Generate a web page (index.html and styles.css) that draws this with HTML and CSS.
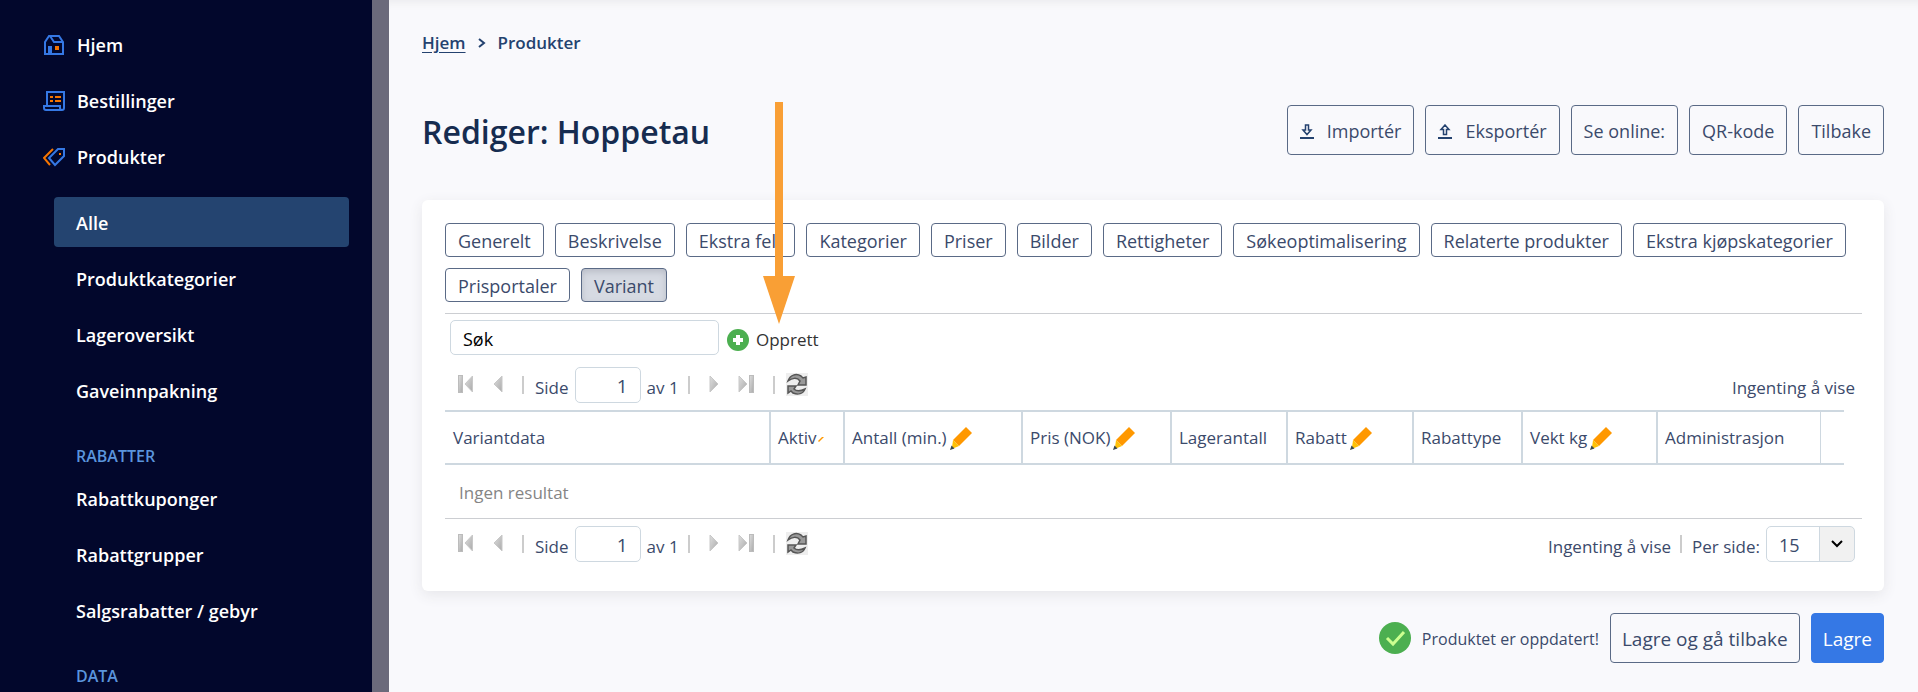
FILE: index.html
```html
<!DOCTYPE html>
<html lang="no">
<head>
<meta charset="utf-8">
<title>Rediger: Hoppetau</title>
<link rel="stylesheet" href="styles.css">
</head>
<body>
<svg class="defs" aria-hidden="true">
  <defs>
    <linearGradient id="silver" x1="0" y1="0" x2="1" y2="1"><stop offset="0" stop-color="#dedede"/><stop offset="1" stop-color="#aaa"/></linearGradient>
    <symbol id="first" viewBox="0 0 16 18"><rect x=".5" y=".5" width="4" height="17" fill="url(#silver)" stroke="#bcbcbc"/><path d="M14.5 1v16L7 9z" fill="url(#silver)" stroke="#c8c8c8"/></symbol>
    <symbol id="prev" viewBox="0 0 10 18"><path d="M9 1v16L1 9z" fill="url(#silver)" stroke="#c8c8c8"/></symbol>
    <symbol id="next" viewBox="0 0 10 18"><path d="M1 1v16l8-8z" fill="url(#silver)" stroke="#c8c8c8"/></symbol>
    <symbol id="last" viewBox="0 0 16 18"><path d="M1 1v16l8-8z" fill="url(#silver)" stroke="#c8c8c8"/><rect x="11.500" y=".5" width="4" height="17" fill="url(#silver)" stroke="#bcbcbc"/></symbol>
    <symbol id="refresh" viewBox="0 0 22 23"><rect width="22" height="23" fill="#eee"/><path d="M2 8C4 2 10 0 15 3l2 2 3-1v8h-8l2-4C11 4 6 5 2 8z" fill="#999" stroke="#555" stroke-width="1.500"/><path d="M19 16c-2 5-7 6-12 4l-2-2-3 2v-7h8l-2 3c3 3 7 2 11 0z" fill="#999" stroke="#555" stroke-width="1.500"/></symbol>
    <symbol id="pen" viewBox="0 0 22 23"><path d="M16 0l6 6L9 19l-6-6z" fill="#ff9800"/><path d="M3 13l6 6-6 2.500-1-1z" fill="#ffc107"/><path d="M1.500 18.500L0 23l4.500-1.500z" fill="#37474f"/></symbol>
  </defs>
</svg>
<div class="app">
  <nav class="sidebar" aria-label="Hovedmeny">
    <ul class="menu">
      <li><a class="menu-link" href="#"><svg class="menu-icon" viewBox="0 0 22 22" fill="none" stroke="#3578e5" stroke-width="2"><path d="M2 20V8l4-6h10l4 6v12zM7 2l4 6h9"/><path d="M5 12h4v8H5z" fill="#3578e5" stroke="none"/><path d="M12 12h4v4h-4z" fill="#f57400" stroke="none"/></svg>Hjem</a></li>
      <li><a class="menu-link" href="#"><svg class="menu-icon" viewBox="0 0 22 22" fill="none" stroke="#3578e5" stroke-width="2"><path d="M4 15V2h17v16q0 2-2 2H3q-2 0-2-2v-2h16v2q0 2 2 2"/><path d="M7 7h3M12 7h6M7 11h3M12 11h6" stroke="#f57400"/></svg>Bestillinger</a></li>
      <li><a class="menu-link" href="#"><svg class="menu-icon" viewBox="0 0 22 22" fill="none" stroke="#3578e5" stroke-width="2"><path d="M15 3h6v7l-9 9-6-7z"/><path d="M10 3l-9 9 6 7" stroke="#f57400"/><path d="M16 7h2v2h-2z" fill="#f57400" stroke="none"/></svg>Produkter</a></li>
    </ul>
    <ul class="menu submenu">
      <li><a class="menu-link active" href="#">Alle</a></li>
      <li><a class="menu-link" href="#">Produktkategorier</a></li>
      <li><a class="menu-link" href="#">Lageroversikt</a></li>
      <li><a class="menu-link" href="#">Gaveinnpakning</a></li>
    </ul>
    <h2 class="menu-title">RABATTER</h2>
    <ul class="menu submenu-group">
      <li><a class="menu-link" href="#">Rabattkuponger</a></li>
      <li><a class="menu-link" href="#">Rabattgrupper</a></li>
      <li><a class="menu-link" href="#">Salgsrabatter / gebyr</a></li>
    </ul>
    <h2 class="menu-title">DATA</h2>
  </nav>
  <main class="main">
    <nav class="crumbs" aria-label="Brødsmulesti">
      <a class="crumb-link" href="#">Hjem</a>
      <svg class="crumb-sep" viewBox="0 0 8 12" fill="none" stroke="#24426f" stroke-width="2"><path d="M1 2l5 4-5 4"/></svg>
      <span>Produkter</span>
    </nav>
    <header class="page-head">
      <h1 class="page-title">Rediger: Hoppetau</h1>
      <div class="actions">
        <button class="btn" type="button"><svg class="btn-icon" viewBox="0 0 14 15" fill="none" stroke="#24426f" stroke-width="2"><path d="M5.500 1h3v5h2.500L7 10.500 3 6h2.500z" stroke-width="1.500"/><path d="M0 14h14"/></svg>Importér</button>
        <button class="btn" type="button"><svg class="btn-icon" viewBox="0 0 14 15" fill="none" stroke="#24426f" stroke-width="2"><path d="M5.500 10.500h3V5.500h2.500L7 1 3 5.500h2.500z" stroke-width="1.500"/><path d="M0 14h14"/></svg>Eksportér</button>
        <button class="btn" type="button">Se online:</button>
        <button class="btn" type="button">QR-kode</button>
        <button class="btn" type="button">Tilbake</button>
      </div>
    </header>
    <section class="card">
      <div class="tabs">
        <button class="tab" type="button">Generelt</button>
        <button class="tab" type="button">Beskrivelse</button>
        <button class="tab" type="button">Ekstra felt</button>
        <button class="tab" type="button">Kategorier</button>
        <button class="tab" type="button">Priser</button>
        <button class="tab" type="button">Bilder</button>
        <button class="tab" type="button">Rettigheter</button>
        <button class="tab" type="button">Søkeoptimalisering</button>
        <button class="tab" type="button">Relaterte produkter</button>
        <button class="tab" type="button">Ekstra kjøpskategorier</button>
        <button class="tab" type="button">Prisportaler</button>
        <button class="tab selected" type="button">Variant</button>
      </div>
      <div class="toolbar">
        <input class="field search" type="text" value="Søk" aria-label="Søk">
        <button class="create" type="button"><svg class="create-icon" viewBox="0 0 22 22"><circle cx="11" cy="11" r="11" fill="#4caf50"/><path d="M11 6v10M6 11h10" stroke="#fff" stroke-width="4"/></svg>Opprett</button>
      </div>
      <div class="pager">
        <button class="icon-btn" type="button" aria-label="Første side"><svg width="16" height="18"><use href="#first"/></svg></button>
        <button class="icon-btn" type="button" aria-label="Forrige side"><svg width="10" height="18"><use href="#prev"/></svg></button>
        <span class="bar"></span>
        <label class="page-label"><span class="text">Side</span><input class="field page" type="text" value="1"><span class="text">av 1</span></label>
        <span class="bar"></span>
        <button class="icon-btn step" type="button" aria-label="Neste side"><svg width="10" height="18"><use href="#next"/></svg></button>
        <button class="icon-btn" type="button" aria-label="Siste side"><svg width="16" height="18"><use href="#last"/></svg></button>
        <span class="bar"></span>
        <button class="icon-btn" type="button" aria-label="Oppdater"><svg width="22" height="23"><use href="#refresh"/></svg></button>
        <span class="text status">Ingenting å vise</span>
      </div>
      <div class="results">
        <table class="grid">
          <colgroup><col><col class="w-active"><col class="w-amount"><col class="w-price"><col class="w-stock"><col class="w-discount"><col class="w-type"><col class="w-weight"><col class="w-admin"><col class="w-end"></colgroup>
          <thead>
            <tr>
              <th>Variantdata</th>
              <th>Aktiv<svg class="pen-small" viewBox="0 0 6 6"><path d="M0 5l4-4h2L1 6z" fill="#ff9800"/></svg></th>
              <th>Antall (min.)<svg class="pen"><use href="#pen"/></svg></th>
              <th>Pris (NOK)<svg class="pen"><use href="#pen"/></svg></th>
              <th>Lagerantall</th>
              <th>Rabatt<svg class="pen"><use href="#pen"/></svg></th>
              <th>Rabattype</th>
              <th>Vekt kg<svg class="pen"><use href="#pen"/></svg></th>
              <th>Administrasjon</th>
              <th class="end"></th>
            </tr>
          </thead>
          <tbody><tr><td colspan="10">Ingen resultat</td></tr></tbody>
        </table>
      </div>
      <div class="pager pager-bottom">
        <button class="icon-btn" type="button" aria-label="Første side"><svg width="16" height="18"><use href="#first"/></svg></button>
        <button class="icon-btn" type="button" aria-label="Forrige side"><svg width="10" height="18"><use href="#prev"/></svg></button>
        <span class="bar"></span>
        <label class="page-label"><span class="text">Side</span><input class="field page" type="text" value="1"><span class="text">av 1</span></label>
        <span class="bar"></span>
        <button class="icon-btn step" type="button" aria-label="Neste side"><svg width="10" height="18"><use href="#next"/></svg></button>
        <button class="icon-btn" type="button" aria-label="Siste side"><svg width="16" height="18"><use href="#last"/></svg></button>
        <span class="bar"></span>
        <button class="icon-btn" type="button" aria-label="Oppdater"><svg width="22" height="23"><use href="#refresh"/></svg></button>
        <span class="text status">Ingenting å vise</span>
        <span class="bar"></span>
        <label class="page-label per-page"><span class="text">Per side:</span>
          <span class="select-wrap"><select class="select"><option>15</option><option>30</option><option>50</option></select><svg class="chevron" viewBox="0 0 12 8" fill="none" stroke="#000" stroke-width="2"><path d="M1 1l5 5 5-5"/></svg></span>
        </label>
      </div>
    </section>
    <footer class="foot">
      <svg class="ok" viewBox="0 0 32 32"><circle cx="16" cy="16" r="16" fill="#4caf50"/><path d="M8 16l6 6L25 10" fill="none" stroke="#ccff90" stroke-width="3"/></svg>
      <span class="message">Produktet er oppdatert!</span>
      <button class="btn" type="button">Lagre og gå tilbake</button>
      <button class="btn primary" type="button">Lagre</button>
    </footer>
    <svg class="arrow" viewBox="0 0 32 222" aria-hidden="true"><path d="M12 0h8v174h12L16 222 0 174h12z" fill="#f99f35"/></svg>
  </main>
</div>
</body>
</html>
```
FILE: styles.css
```css
* { box-sizing: border-box; }

body {
  margin: 0;
  background: #f9f9fc;
  color: #3b4a6b;
  font: 17px/24px "Segoe UI", "Open Sans", "Noto Sans", sans-serif;
}

button, input, select { font: inherit; color: inherit; }
svg { display: block; flex: none; }
.defs { position: absolute; width: 0; height: 0; }

.app { display: flex; height: 100vh; overflow: hidden; }

/* Sidebar */
.sidebar {
  flex: none;
  width: 389px;
  padding: 19px 23px 0 28px;
  background: #02072c;
  border-right: 17px solid #6b6a7b;
  overflow: hidden;
}
.menu {
  display: flex;
  flex-direction: column;
  gap: 6px;
  margin: 0;
  padding: 0;
  list-style: none;
}
.submenu { margin: 16px 0 0 26px; }
.submenu-group { margin: 5px 0 0 26px; }
.menu-link {
  display: flex;
  align-items: center;
  gap: 12px;
  height: 50px;
  padding: 2px 0 0 15px;
  border-radius: 4px;
  color: #fff;
  font-size: 18px;
  font-weight: 600;
  text-decoration: none;
}
.submenu .menu-link, .submenu-group .menu-link { padding-left: 22px; }
.menu-link.active { background: #244470; }
.menu-icon { width: 22px; height: 22px; }
.menu-title {
  margin: 29px 0 0 48px;
  color: #5a94dc;
  font-size: 16px;
  font-weight: 600;
  line-height: 24px;
}

/* Page */
.main {
  position: relative;
  flex: 1;
  min-width: 0;
  padding: 31px 34px 0 33px;
  box-shadow: inset 0 10px 10px -8px #e9e9ec;
}
.crumbs {
  display: flex;
  align-items: center;
  gap: 12px;
  color: #24426f;
  font-size: 17px;
  font-weight: 600;
}
.crumb-link { color: inherit; text-underline-offset: 3px; }
.crumb-sep { width: 8px; height: 12px; }
.page-head {
  display: flex;
  align-items: center;
  justify-content: space-between;
  margin: 50px 0 45px;
}
.page-title {
  margin: 0;
  padding-top: 4px;
  color: #162c50;
  font-size: 32px;
  font-weight: 600;
  line-height: 44px;
}
.actions { display: flex; gap: 11px; }
.btn {
  display: flex;
  align-items: center;
  gap: 13px;
  height: 50px;
  padding: 2px 12px 0;
  background: transparent;
  border: 1px solid #5a6a86;
  border-radius: 4px;
  font-size: 18px;
  white-space: nowrap;
}
.btn-icon { width: 14px; height: 15px; }
.primary { background: #3578e5; border-color: #3578e5; color: #fff; }

/* Card */
.card {
  padding: 23px 22px 29px 23px;
  background: #fff;
  border-radius: 6px;
  box-shadow: 0 4px 14px #e6e6ea;
}
.tabs {
  display: flex;
  flex-wrap: wrap;
  gap: 11px;
  padding-bottom: 11px;
  border-bottom: 1px solid #ccced2;
}
.tab {
  height: 34px;
  padding: 2px 12px 0;
  background: #fff;
  border: 1px solid #5a6a86;
  border-radius: 4px;
  font-size: 18px;
  line-height: 30px;
  white-space: nowrap;
}
.selected { background: #d6dae2; box-shadow: inset 0 3px 6px #b9bdc7; }

.toolbar { display: flex; align-items: center; gap: 8px; padding: 6px 5px 12px; }
.field {
  background: #fff;
  border: 1px solid #ced8e0;
  border-radius: 5px;
}
.search { width: 269px; height: 35px; padding: 2px 12px 0; color: #000; font-size: 18px; }
.create {
  display: flex;
  align-items: center;
  gap: 7px;
  padding: 4px 0 0;
  background: none;
  border: 0;
  color: #333;
}
.create-icon { width: 22px; height: 22px; }

.pager { display: flex; align-items: center; padding: 0 7px 7px 13px; }
.pager-bottom { padding-bottom: 0; }
.icon-btn { margin: 0 19px 2px 0; padding: 0; background: none; border: 0; }
.step { margin-left: 8px; }
.bar { width: 2px; height: 18px; margin-right: 11px; background: #ccc; }
.page-label { display: flex; align-items: center; gap: 6px; margin-right: 9px; white-space: nowrap; }
.page { width: 66px; height: 36px; padding: 2px 12px 0; font-size: 19px; text-align: right; }
.text { padding-top: 5px; white-space: nowrap; }
.status { margin-left: auto; }
.status + .bar { margin: 0 10px 0 9px; }
.per-page { margin-right: 0; }
.select-wrap { position: relative; display: block; }
.select {
  display: block;
  width: 89px;
  height: 36px;
  padding: 2px 12px 0;
  appearance: none;
  background: linear-gradient(to right, #fff 52px, #ced8e0 52px, #ced8e0 53px, #f1f1f1 53px);
  border: 1px solid #ced8e0;
  border-radius: 5px;
  font-size: 18px;
}
.chevron { position: absolute; top: 14px; right: 12px; width: 12px; height: 8px; pointer-events: none; }

/* Variant table */
.results { margin-bottom: 7px; padding-right: 18px; border-bottom: 1px solid #ccced2; }
.grid { width: 100%; border-spacing: 0; table-layout: fixed; }
.grid th {
  height: 55px;
  padding: 1px 0 0 7px;
  border: solid #ced8e0;
  border-width: 2px 0 2px 2px;
  font-weight: 400;
  text-align: left;
  white-space: nowrap;
}
.grid th:first-child { padding-left: 8px; border-left: 0; }
.grid .end { border-left-width: 1px; }
.grid td { height: 53px; padding: 2px 14px 0; color: #858585; }
.w-active { width: 74px; }
.w-amount { width: 178px; }
.w-price { width: 149px; }
.w-stock { width: 116px; }
.w-discount { width: 126px; }
.w-type { width: 109px; }
.w-weight { width: 135px; }
.w-admin { width: 164px; }
.w-end { width: 24px; }
.pen { display: inline-block; width: 22px; height: 23px; margin-left: 3px; vertical-align: middle; }
.pen-small { display: inline-block; width: 6px; height: 6px; margin-left: 1px; vertical-align: middle; }

/* Footer */
.foot { display: flex; align-items: center; justify-content: flex-end; gap: 11px; padding-top: 22px; }
.foot .btn { padding: 2px 11px 0; font-size: 19px; }
.ok { width: 32px; height: 32px; }
.message { padding-top: 2px; font-size: 16px; }

/* Pointer drawn over the page towards the create button */
.arrow { position: absolute; top: 102px; left: 374px; width: 32px; height: 222px; pointer-events: none; }
```
